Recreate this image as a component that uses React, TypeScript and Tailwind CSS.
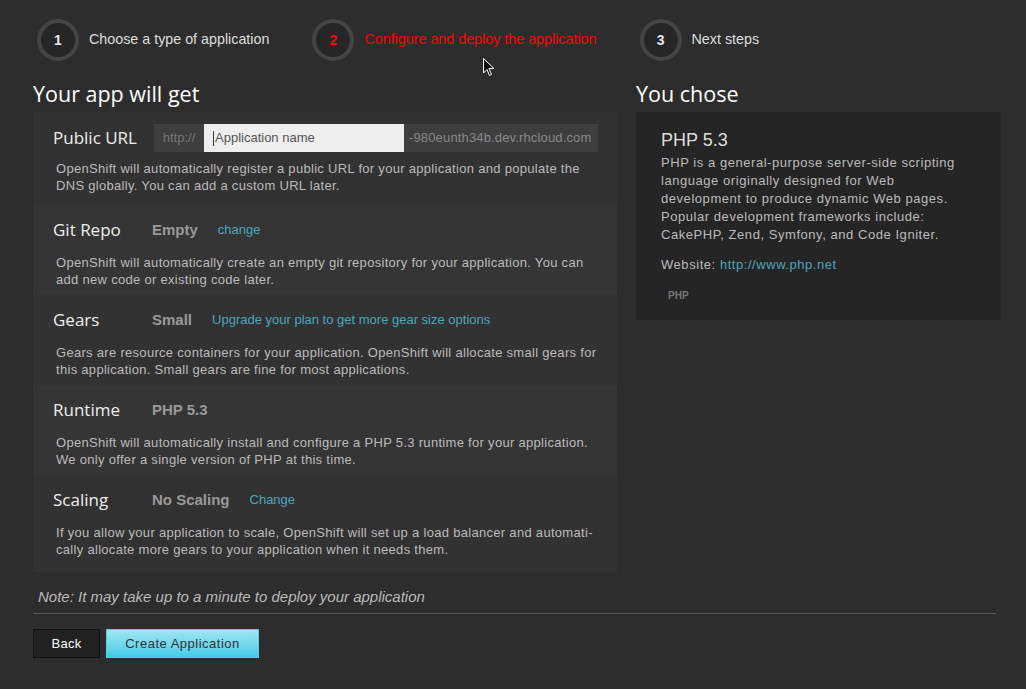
import React from 'react';

const sans = { fontFamily: '"Liberation Sans", Arial, sans-serif' };
const head = { fontFamily: '"Open Sans", "Noto Sans", sans-serif' };

interface Step {
    n: number;
    label: string;
    active?: boolean;
}

const steps: Step[] = [
    { n: 1, label: 'Choose a type of application' },
    { n: 2, label: 'Configure and deploy the application', active: true },
    { n: 3, label: 'Next steps' },
];

interface Row {
    title: string;
    value?: string;
    link?: string;
    lines: string[];
    bg: string;
}

const rows: Row[] = [
    {
        title: 'Git Repo',
        value: 'Empty',
        link: 'change',
        lines: ['OpenShift will automatically create an empty git repository for your application. You can', 'add new code or existing code later.'],
        bg: 'bg-[#353535]',
    },
    {
        title: 'Gears',
        value: 'Small',
        link: 'Upgrade your plan to get more gear size options',
        lines: ['Gears are resource containers for your application. OpenShift will allocate small gears for', 'this application. Small gears are fine for most applications.'],
        bg: 'bg-[#323232]',
    },
    {
        title: 'Runtime',
        value: 'PHP 5.3',
        lines: ['OpenShift will automatically install and configure a PHP 5.3 runtime for your application.', 'We only offer a single version of PHP at this time.'],
        bg: 'bg-[#353535]',
    },
    {
        title: 'Scaling',
        value: 'No Scaling',
        link: 'Change',
        lines: ['If you allow your application to scale, OpenShift will set up a load balancer and automati-', 'cally allocate more gears to your application when it needs them.'],
        bg: 'bg-[#323232]',
    },
];

const phpLines = [
    'PHP is a general-purpose server-side scripting',
    'language originally designed for Web',
    'development to produce dynamic Web pages.',
    'Popular development frameworks include:',
    'CakePHP, Zend, Symfony, and Code Igniter.',
];

function Desc({ lines, className }: { lines: string[]; className: string }) {
    return (
        <div className={`${className} pl-[3px] text-[13px] leading-[17px] text-[#bbbbbb] tracking-[0.3px] whitespace-nowrap`}>
            {lines.map(l => <div key={l}>{l}</div>)}
        </div>
    );
}

function Cursor() {
    return (
        <svg className="absolute left-[483px] top-[58px]" width="12" height="19" viewBox="0 0 12 19">
            <path d="M0.5 0.5 L0.5 15 L4 11.5 L6.5 17.5 L8.5 16.5 L6 10.5 L11 10.5 Z" fill="#111" stroke="#fff" strokeWidth="1" />
        </svg>
    );
}

export default function App() {
    return (
        <div className="relative w-[1026px] h-[689px] bg-[#2d2d2d] overflow-hidden" style={sans}>
            <div className="flex items-center gap-[43px] pl-[37px] pt-[19px]">
                {steps.map(s => (
                    <div key={s.n} className="flex items-center gap-[10px]">
                        <div className="w-[42px] h-[42px] rounded-full border-[4px] border-[#444] bg-[#262626] flex items-center justify-center">
                            <span className={`text-[14px] font-bold ${s.active ? 'text-[#ff0000]' : 'text-[#e6e6f0]'}`}>{s.n}</span>
                        </div>
                        <span className={`text-[14.3px] ${s.active ? 'text-[#ff0000]' : 'text-[#dddddd]'}`}>{s.label}</span>
                    </div>
                ))}
            </div>

            <div className="flex gap-[19px] pl-[33px] mt-[19px]">
                <div className="w-[584px]">
                    <h2 className="text-[21.5px] leading-[28px] text-white mb-[4px]" style={head}>Your app will get</h2>
                    <div className="bg-[#323232]">
                        <div className="pl-[20px] pr-[19px] pt-[12px] pb-[11px] bg-[#323232]">
                            <div className="flex items-center h-7">
                                <span className="w-[101px] text-[17px] text-[#eeeeee]" style={head}>Public URL</span>
                                <div className="flex h-7 text-[13px]">
                                    <span className="w-[50px] bg-[#3e3e3e] text-[#777] flex items-center justify-center">http://</span>
                                    <div className="w-[200px] bg-[#eeeeee] text-[#555] flex items-center pl-[9px]">
                                        <span className="w-px h-[15px] bg-[#333] mr-px" />Application name
                                    </div>
                                    <span className="w-[194px] bg-[#3e3e3e] text-[#888] flex items-center pl-[5px] tracking-[0.15px]">-980eunth34b.dev.rhcloud.com</span>
                                </div>
                            </div>
                            <Desc
                                className="mt-[8px]"
                                lines={['OpenShift will automatically register a public URL for your application and populate the', 'DNS globally. You can add a custom URL later.']}
                            />
                        </div>
                        {rows.map((r, i) => (
                            <div key={r.title} className={`pl-[20px] pr-[19px] pt-[11px] ${i === rows.length - 1 ? 'pb-[14px]' : 'pb-[7px]'} ${r.bg}`}>
                                <div className="flex items-center h-7">
                                    <span className="w-[99px] text-[17px] text-[#eeeeee]" style={head}>{r.title}</span>
                                    <span className="text-[15px] font-bold text-[#999] mr-[20px]">{r.value}</span>
                                    {r.link && <span className="text-[13px] text-[#4ba6bb]">{r.link}</span>}
                                </div>
                                <Desc className="mt-[10px]" lines={r.lines} />
                            </div>
                        ))}
                    </div>
                    <p className="mt-[15px] pl-[5px] text-[15px] leading-[20px] italic text-[#bbbbbb]">Note: It may take up to a minute to deploy your application</p>
                </div>

                <div className="w-[365px]">
                    <h2 className="text-[21.5px] leading-[28px] text-white mb-[4px]" style={head}>You chose</h2>
                    <div className="bg-[#252525] pl-[25px] pr-[20px] pt-[16px] pb-[17px]">
                        <div className="text-[18px] leading-[24px] text-[#dddddd]">PHP 5.3</div>
                        <div className="mt-[2px] text-[13px] leading-[18px] text-[#bbbbbb] tracking-[0.55px] whitespace-nowrap">
                            {phpLines.map(l => <div key={l}>{l}</div>)}
                        </div>
                        <p className="mt-[12px] text-[13px] leading-[18px] text-[#bbbbbb] tracking-[0.55px]">
                            Website: <span className="text-[#4ba6bb]">http://www.php.net</span>
                        </p>
                        <div className="mt-[15px] pl-[7px] text-[10px] leading-[14px] font-bold text-[#777]">PHP</div>
                    </div>
                </div>
            </div>

            <div className="ml-[33px] mt-[6px] w-[963px] h-px bg-[#555]" />

            <div className="flex gap-[6px] ml-[33px] mt-[15px]">
                <button className="h-[29px] w-[67px] bg-[#222] border border-[#111] text-[13px] tracking-[0.3px] text-white">Back</button>
                <button className="h-[29px] w-[153px] bg-gradient-to-b from-[#9ee6f3] to-[#3ecbe6] border border-[#5ccde0] text-[13px] tracking-[0.5px] text-[#333]">Create Application</button>
            </div>

            <Cursor />
        </div>
    );
}
